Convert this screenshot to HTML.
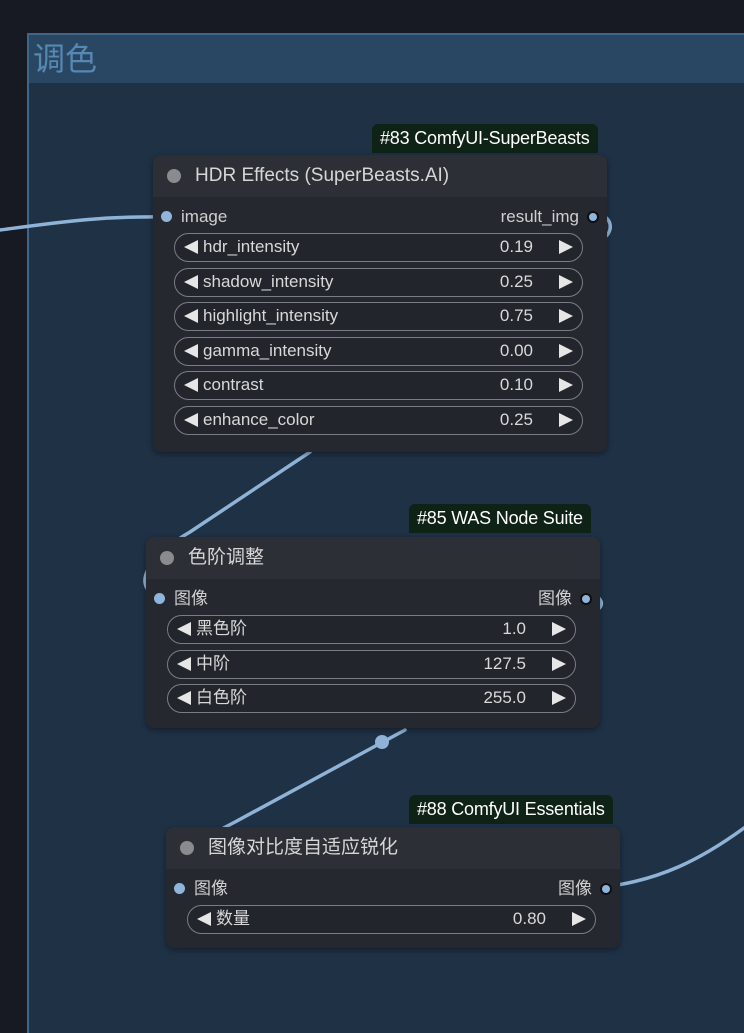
<!DOCTYPE html>
<html><head><meta charset="utf-8"><style>
*{margin:0;padding:0;box-sizing:border-box}
body{width:744px;height:1024px;overflow:hidden;background:#171a22;font-family:"Liberation Sans","Noto Sans CJK SC",sans-serif;position:relative}
.grp{position:absolute;left:27px;top:33px;width:740px;height:1000px;background:#1f3145;border-left:2px solid #3f6688;border-top:2px solid #3f6688}
.gh{position:absolute;left:0;top:0;right:0;height:48px;background:#294763;color:#5688b2;font-size:32px;padding:2px 0 0 4px;line-height:44px}
.node{position:absolute;width:454px;background:#25282f;border-radius:8px;box-shadow:0 2px 6px rgba(0,0,0,.4)}
.tt{height:42px;background:#2c2f36;border-radius:8px 8px 0 0;color:#d6d6d6;font-size:19px;line-height:42px;padding-left:42px;position:relative}
.tt:before{content:"";position:absolute;left:14px;top:14px;width:14px;height:14px;border-radius:50%;background:#8a8b8e}
.badge{position:absolute;height:29px;background:#0f2216;color:#fff;font-size:18px;line-height:29px;padding:0 8px;border-radius:6px 6px 0 0;letter-spacing:-0.2px}
.slot{position:relative;height:36px;color:#cfcfcf;font-size:17px;line-height:40px}
.slot .l{position:absolute;left:28px}.slot .r{position:absolute;right:28px}
.dot{position:absolute;top:14px;width:11px;height:11px;border-radius:50%;background:#8fb5db}
.dot.o{border:2px solid #0d0f14;width:12px;height:12px}
.w{position:relative;margin:0 24px 5.5px 21px;height:29px;border:1.5px solid #7a7d84;border-radius:15px;background:#22252b;color:#d8d8d8;font-size:17px;line-height:26px}
.w .n{position:absolute;left:28px}.w .v{position:absolute;right:49px}
.w:before{content:"";position:absolute;left:9px;top:6px;border-right:14px solid #e6e6e6;border-top:7.5px solid transparent;border-bottom:7.5px solid transparent}
.w:after{content:"";position:absolute;right:9px;top:6px;border-left:14px solid #e6e6e6;border-top:7.5px solid transparent;border-bottom:7.5px solid transparent}
svg{position:absolute;left:0;top:0}
</style></head><body>
<div class="grp"><div class="gh">调色</div></div>
<svg width="744" height="1024"><g fill="none" stroke="#8fb3d6" stroke-width="3.5" stroke-linecap="round">
<path d="M0,230 C60,222 100,216 166,217"/>
<path d="M600,214 C614,220 612,232 604,238"/>
<path d="M310,452 L190,532 C150,555 130,585 158,597"/>
<path d="M593,594 C604,600 603,606 597,610"/>
<path d="M405,730 L235,822 C180,850 150,880 179,887"/>
<path d="M604,887 C660,880 700,860 744,828"/>
</g><circle cx="382" cy="742" r="7" fill="#8fb3d6"/></svg>

<div class="badge" style="left:372px;top:124px">#83 ComfyUI-SuperBeasts</div>
<div class="node" style="left:153px;top:155px;height:297px">
<div class="tt">HDR Effects (SuperBeasts.AI)</div>
<div class="slot"><div class="dot" style="left:8px"></div><span class="l">image</span><span class="r">result_img</span><div class="dot o" style="right:8px"></div></div>
<div class="w"><span class="n">hdr_intensity</span><span class="v">0.19</span></div>
<div class="w"><span class="n">shadow_intensity</span><span class="v">0.25</span></div>
<div class="w"><span class="n">highlight_intensity</span><span class="v">0.75</span></div>
<div class="w"><span class="n">gamma_intensity</span><span class="v">0.00</span></div>
<div class="w"><span class="n">contrast</span><span class="v">0.10</span></div>
<div class="w"><span class="n">enhance_color</span><span class="v">0.25</span></div>
</div>

<div class="badge" style="left:409px;top:504px">#85 WAS Node Suite</div>
<div class="node" style="left:146px;top:537px;height:191px">
<div class="tt">色阶调整</div>
<div class="slot"><div class="dot" style="left:8px"></div><span class="l">图像</span><span class="r">图像</span><div class="dot o" style="right:8px"></div></div>
<div class="w"><span class="n">黑色阶</span><span class="v">1.0</span></div>
<div class="w"><span class="n">中阶</span><span class="v">127.5</span></div>
<div class="w"><span class="n">白色阶</span><span class="v">255.0</span></div>
</div>

<div class="badge" style="left:409px;top:795px">#88 ComfyUI Essentials</div>
<div class="node" style="left:166px;top:827px;height:121px">
<div class="tt">图像对比度自适应锐化</div>
<div class="slot"><div class="dot" style="left:8px"></div><span class="l">图像</span><span class="r">图像</span><div class="dot o" style="right:8px"></div></div>
<div class="w"><span class="n">数量</span><span class="v">0.80</span></div>
</div>
</body></html>
